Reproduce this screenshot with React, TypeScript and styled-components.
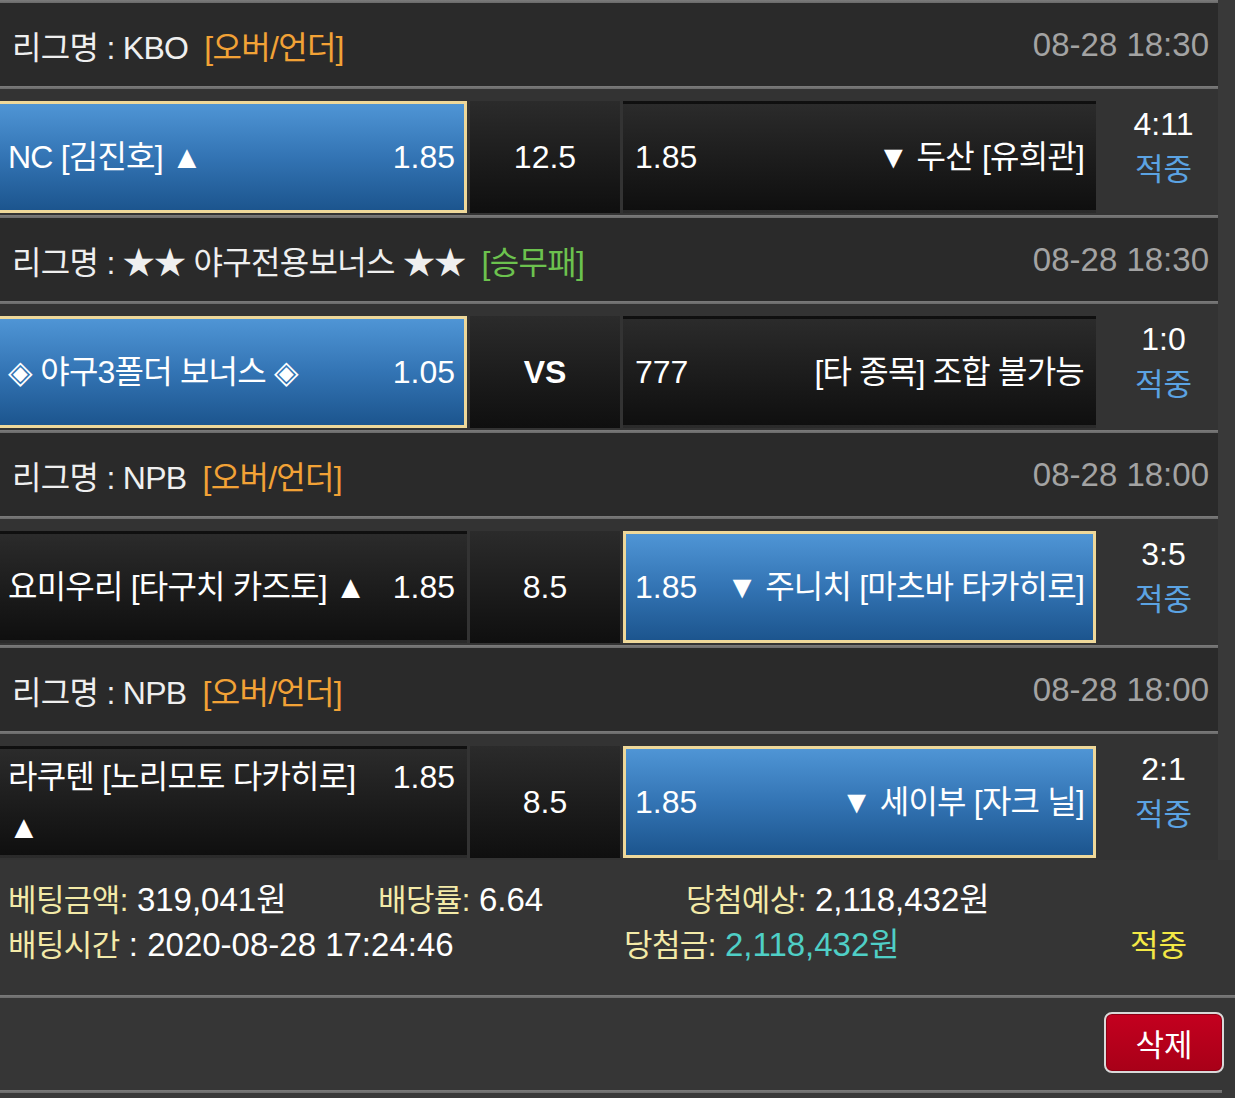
import React from "react";
import styled, { createGlobalStyle } from "styled-components";

const Global = createGlobalStyle`
  html, body { margin: 0; padding: 0; background: #393939; }
  body {
    font-family: "Liberation Sans", "Noto Sans CJK KR", sans-serif;
    overflow-x: hidden;
    color: #f2f2f2;
  }
`;

const Page = styled.div`
  margin-left: -4px;
  width: 1239px;
`;

const List = styled.div`
  width: 1222px;
  background: #333333;
`;

const Sep = styled.div<{ $w?: number }>`
  height: 3px;
  width: ${(p) => (p.$w ? `${p.$w}px` : "100%")};
  background: linear-gradient(to bottom, #7b7b7b, #6a6a6a);
`;

const Header = styled.div`
  height: 83px;
  background: #2a2a2a;
  display: flex;
  align-items: center;
  justify-content: space-between;
  padding: 0 9px 0 16px;
  font-size: 32px;
  color: #efefef;
`;

const League = styled.span`
  letter-spacing: -0.7px;
`;

const Tag = styled.span<{ $c: string }>`
  color: ${(p) => p.$c};
  margin-left: 16px;
`;

const DateText = styled.span`
  color: #a3a3a3;
  font-size: 33px;
`;

const GameRow = styled.div`
  height: 126px;
  box-sizing: border-box;
  padding: 12px 0 9px;
  display: grid;
  grid-template-columns: 471px 150px 473px 1fr;
  column-gap: 3px;
  background: #333333;
`;

const Pick = styled.div<{ $on?: boolean }>`
  box-sizing: border-box;
  border: 3px solid ${(p) => (p.$on ? "#eed89a" : "transparent")};
  background: ${(p) =>
    p.$on
      ? "linear-gradient(to bottom, #4f95d5 0%, #3374b4 50%, #1c558e 100%)"
      : "linear-gradient(to bottom, #2b2b2b 0%, #1a1a1a 60%, #0f0f0f 100%)"};
  display: flex;
  align-items: center;
  padding: 0 9px;
  font-size: 32px;
  color: #ffffff;
`;

const PickLine = styled.div`
  width: 100%;
  display: flex;
  align-items: baseline;
  justify-content: space-between;
  gap: 12px;
  line-height: 50px;
`;

const Name = styled.span<{ $right?: boolean }>`
  flex: 0 1 auto;
  letter-spacing: -0.8px;
  max-width: ${(p) => (p.$right ? "none" : "362px")};
  text-align: ${(p) => (p.$right ? "right" : "left")};
`;

const Odds = styled.span`
  flex: none;
`;

const Middle = styled.div<{ $bold?: boolean }>`
  background: linear-gradient(to bottom, #2b2b2b 0%, #1a1a1a 60%, #0f0f0f 100%);
  display: flex;
  align-items: center;
  justify-content: center;
  padding-top: 1px;
  font-size: 32px;
  font-weight: ${(p) => (p.$bold ? 700 : 400)};
  color: #ffffff;
`;

const ScoreCol = styled.div`
  display: flex;
  flex-direction: column;
  align-items: center;
  justify-content: center;
  padding: 0 0 20px 10px;
  font-size: 31px;
  line-height: 46px;
`;

const Score = styled.span`
  color: #ffffff;
  font-size: 32px;
`;

const Result = styled.span<{ $c: string }>`
  color: ${(p) => p.$c};
`;

const Summary = styled.div`
  background: #353535;
  padding: 17px 0 28px 12px;
`;

const SumRow = styled.div`
  height: 45px;
  display: flex;
  align-items: center;
`;

const Field = styled.div<{ $w?: number }>`
  flex: none;
  width: ${(p) => (p.$w ? `${p.$w}px` : "auto")};
  white-space: nowrap;
  font-size: 33px;
  line-height: 45px;
  height: 45px;
`;

const Label = styled.span`
  color: #f3eaa8;
  font-size: 31px;
  letter-spacing: -0.6px;
`;

const Value = styled.span<{ $c?: string; $ko?: boolean }>`
  color: ${(p) => p.$c || "#ffffff"};
  font-size: ${(p) => (p.$ko ? "31px" : "33px")};
`;

const ButtonRow = styled.div`
  height: 92px;
  background: #363636;
  display: flex;
  align-items: center;
  justify-content: flex-end;
  padding-right: 11px;
  box-sizing: border-box;
`;

const DeleteButton = styled.button`
  width: 120px;
  height: 61px;
  margin-top: -3px;
  border: 2px solid #d9d9d9;
  border-radius: 8px;
  background: linear-gradient(to bottom, #c4001f, #a80018);
  color: #ffffff;
  font-family: "Liberation Sans", "Noto Sans CJK KR", sans-serif;
  font-size: 31px;
  padding: 0;
  box-shadow: inset 0 0 0 1px #8a0013;
`;

type Game = {
  league: string;
  tag: string;
  tagColor: string;
  date: string;
  home: string;
  homeOdds: string;
  homeOn?: boolean;
  mid: string;
  midBold?: boolean;
  awayOdds: string;
  away: string;
  awayOn?: boolean;
  score: string;
};

const games: Game[] = [
  {
    league: "리그명 : KBO",
    tag: "[오버/언더]",
    tagColor: "#f2a236",
    date: "08-28 18:30",
    home: "NC [김진호] ▲",
    homeOdds: "1.85",
    homeOn: true,
    mid: "12.5",
    awayOdds: "1.85",
    away: "▼ 두산 [유희관]",
    score: "4:11",
  },
  {
    league: "리그명 : ★★ 야구전용보너스 ★★",
    tag: "[승무패]",
    tagColor: "#6cc24e",
    date: "08-28 18:30",
    home: "◈ 야구3폴더 보너스 ◈",
    homeOdds: "1.05",
    homeOn: true,
    mid: "VS",
    midBold: true,
    awayOdds: "777",
    away: "[타 종목] 조합 불가능",
    score: "1:0",
  },
  {
    league: "리그명 : NPB",
    tag: "[오버/언더]",
    tagColor: "#f2a236",
    date: "08-28 18:00",
    home: "요미우리 [타구치 카즈토] ▲",
    homeOdds: "1.85",
    mid: "8.5",
    awayOdds: "1.85",
    away: "▼ 주니치 [마츠바 타카히로]",
    awayOn: true,
    score: "3:5",
  },
  {
    league: "리그명 : NPB",
    tag: "[오버/언더]",
    tagColor: "#f2a236",
    date: "08-28 18:00",
    home: "라쿠텐 [노리모토 다카히로] ▲",
    homeOdds: "1.85",
    mid: "8.5",
    awayOdds: "1.85",
    away: "▼ 세이부 [자크 닐]",
    awayOn: true,
    score: "2:1",
  },
];

export default function App() {
  return (
    <>
      <Global />
      <Page>
        <List>
          {games.map((g, i) => (
            <React.Fragment key={i}>
              <Sep />
              <Header>
                <League>
                  {g.league}
                  <Tag $c={g.tagColor}>{g.tag}</Tag>
                </League>
                <DateText>{g.date}</DateText>
              </Header>
              <Sep />
              <GameRow>
                <Pick $on={g.homeOn}>
                  <PickLine>
                    <Name>{g.home}</Name>
                    <Odds>{g.homeOdds}</Odds>
                  </PickLine>
                </Pick>
                <Middle $bold={g.midBold}>{g.mid}</Middle>
                <Pick $on={g.awayOn}>
                  <PickLine>
                    <Odds>{g.awayOdds}</Odds>
                    <Name $right>{g.away}</Name>
                  </PickLine>
                </Pick>
                <ScoreCol>
                  <Score>{g.score}</Score>
                  <Result $c="#5ba3e3">적중</Result>
                </ScoreCol>
              </GameRow>
            </React.Fragment>
          ))}
        </List>
        <Summary>
          <SumRow>
            <Field $w={370}>
              <Label>베팅금액:</Label> <Value>319,041원</Value>
            </Field>
            <Field $w={308}>
              <Label>배당률:</Label> <Value>6.64</Value>
            </Field>
            <Field>
              <Label>당첨예상:</Label> <Value>2,118,432원</Value>
            </Field>
          </SumRow>
          <SumRow>
            <Field $w={616}>
              <Label>배팅시간</Label> <Value>: 2020-08-28 17:24:46</Value>
            </Field>
            <Field $w={506}>
              <Label>당첨금:</Label> <Value $c="#4fcfc6">2,118,432원</Value>
            </Field>
            <Field>
              <Value $c="#f3e845" $ko>
                적중
              </Value>
            </Field>
          </SumRow>
        </Summary>
        <Sep />
        <ButtonRow>
          <DeleteButton>삭제</DeleteButton>
        </ButtonRow>
        <Sep $w={1226} />
      </Page>
    </>
  );
}
